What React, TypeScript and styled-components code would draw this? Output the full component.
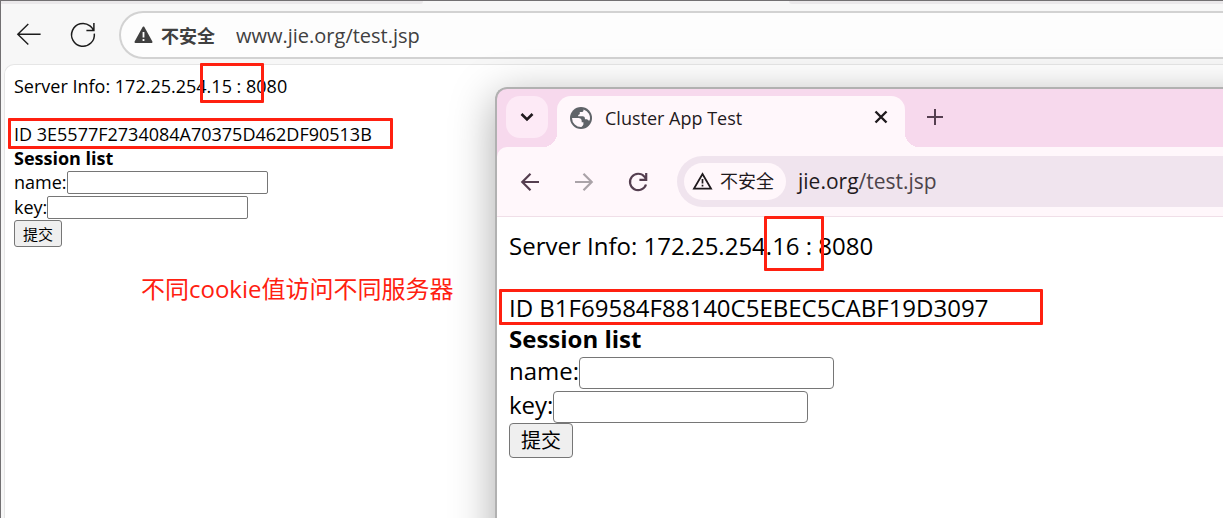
import React from "react";
import styled, { createGlobalStyle } from "styled-components";

const RED = "#ff2010";

const GlobalStyle = createGlobalStyle`
  *, *::before, *::after { box-sizing: border-box; }
  body {
    margin: 0;
    font-family: "Open Sans", "Noto Sans CJK SC", sans-serif;
    color: #000;
  }
  button, input { font: inherit; margin: 0; }
`;

const Desktop = styled.main`
  position: relative;
  min-height: 100vh;
  display: flex;
  overflow: hidden;
`;

/* ---------- back window ---------- */

const BackWindow = styled.section`
  flex: 1;
  display: flex;
  flex-direction: column;
  background: #f7f7f7;
  border-top: 1px solid #727072;
  border-left: 1px solid #727072;
`;

const TabEdge = styled.div`
  display: flex;
  justify-content: space-between;
  height: 3px;
`;

const InactiveTabs = styled.div<{ $side: "left" | "right" }>`
  width: ${(p) => (p.$side === "left" ? "34.5%" : "35.5%")};
  background: #eae8ea;
  border-radius: ${(p) => (p.$side === "left" ? "0 0 10px 0" : "0 0 0 10px")};
`;

const BackToolbar = styled.header`
  display: flex;
  align-items: center;
  padding: 7px 0 5px 14px;
`;

const IconButton = styled.button`
  display: inline-flex;
  align-items: center;
  justify-content: center;
  flex: none;
  padding: 0;
  border: 0;
  background: none;
  color: inherit;
  svg { display: block; }
  &:disabled { color: #aaa3a8; }
`;

const BackNav = styled.nav`
  display: flex;
  gap: 26px;
  width: 104px;
  color: #1c1c1c;
`;

const BackAddress = styled.div`
  flex: 1;
  display: flex;
  align-items: center;
  height: 48px;
  padding-left: 13px;
  border: 2px solid #d2d2d2;
  border-right: 0;
  border-radius: 24px 0 0 24px;
  background: #fdfdfd;
`;

const BackSecurity = styled.span`
  display: flex;
  align-items: center;
  gap: 8px;
  margin-right: 21px;
  font-size: 18px;
  font-weight: 700;
  color: #404040;
`;

const Url = styled.input`
  flex: 1;
  min-width: 0;
  padding: 0;
  border: 0;
  outline: 0;
  background: none;
  font-size: 20px;
  color: #404040;
`;

/* ---------- front window ---------- */

const FrontWindow = styled.section`
  position: absolute;
  top: 87px;
  left: 495px;
  right: 0;
  bottom: 0;
  display: flex;
  flex-direction: column;
  border-top: 2px solid #b1b1b1;
  border-left: 2px solid #b1b1b1;
  border-radius: 12px 0 0 0;
  overflow: hidden;
  background: #f7d9ed;
`;

const FrontShadow = styled.div`
  position: absolute;
  top: 87px;
  left: 495px;
  right: -80px;
  bottom: -80px;
  border-radius: 12px;
  box-shadow: 0 10px 44px rgba(0, 0, 0, 0.34);
`;

const TabStrip = styled.div`
  display: flex;
  height: 58px;
  padding: 7px 0 0 9px;
`;

const TabSearch = styled(IconButton)`
  width: 42px;
  height: 42px;
  margin-right: 9px;
  border-radius: 14px;
  background: #fdeaf6;
  color: #1f1a1d;
`;

const ActiveTab = styled.div`
  position: relative;
  display: flex;
  align-items: center;
  width: 348px;
  padding: 0 14px 8px 13px;
  border-radius: 14px 14px 0 0;
  background: #fff7fb;
  color: #1f1a1d;

  &::before, &::after {
    content: "";
    position: absolute;
    bottom: 0;
    width: 14px;
    height: 14px;
  }
  &::before {
    right: 100%;
    background: radial-gradient(circle at 0 0, transparent 14px, #fff7fb 14px);
  }
  &::after {
    left: 100%;
    background: radial-gradient(circle at 100% 0, transparent 14px, #fff7fb 14px);
  }
`;

const TabTitle = styled.span`
  flex: 1;
  margin-left: 13px;
  font-size: 18px;
  line-height: 24px;
`;

const NewTab = styled(IconButton)`
  width: 60px;
  height: 42px;
  color: #553f50;
`;

const FrontToolbar = styled.header`
  display: flex;
  align-items: center;
  height: 70px;
  padding: 0 0 1px 20px;
  border-bottom: 1px solid #f0dfe8;
  border-radius: 10px 0 0 0;
  background: #fff7fb;
`;

const FrontNav = styled.nav`
  display: flex;
  gap: 28px;
  width: 160px;
  color: #553f50;
`;

const FrontAddress = styled.div`
  flex: 1;
  display: flex;
  align-items: center;
  height: 51px;
  padding-left: 7px;
  border-radius: 26px 0 0 26px;
  background: #f0e4ee;
`;

const SecurityChip = styled.button`
  display: flex;
  align-items: center;
  gap: 7px;
  height: 37px;
  margin-right: 12px;
  padding: 0 12px 0 8px;
  border: 0;
  border-radius: 19px;
  background: #fff7fb;
  font-size: 18px;
  line-height: 24px;
  color: #1f1a1d;
  white-space: nowrap;
`;

const FrontUrl = styled.div`
  font-size: 21px;
  line-height: 28px;
  color: #4d444b;
  b { font-weight: 400; color: #1f1a1d; }
`;

/* ---------- test page shown in both windows ---------- */

const Page = styled.article<{ $large?: boolean }>`
  position: relative;
  flex: 1;
  background: #fff;
  white-space: nowrap;
  font-size: ${(p) => (p.$large ? 24 : 18)}px;
  line-height: ${(p) => (p.$large ? 31 : 24)}px;
  padding: ${(p) => (p.$large ? "13px 12px" : "9px")};
  ${(p) =>
    !p.$large &&
    `margin-left: 3px;
     border-top: 1px solid #e6e6e6;
     border-left: 1px solid #e6e6e6;
     border-radius: 10px 0 0 0;`}
`;

const Line = styled.p`
  margin: 0 0 1lh;
  & + & { margin: 0; }
`;

const Heading = styled.h1`
  margin: 0;
  font-size: inherit;
  font-weight: 700;
`;

const Form = styled.form<{ $large?: boolean }>`
  padding-top: ${(p) => (p.$large ? 1 : 0)}px;
`;

const Field = styled.div<{ $large?: boolean }>`
  display: flex;
  align-items: flex-start;
  height: ${(p) => (p.$large ? 34 : 25)}px;
  input {
    align-self: ${(p) => (p.$large ? "flex-end" : "center")};
    width: ${(p) => (p.$large ? 255 : 201)}px;
    height: ${(p) => (p.$large ? 32 : 23)}px;
    border: 1px solid #767676;
    border-radius: ${(p) => (p.$large ? 4 : 2)}px;
    background: #fff;
  }
`;

const Submit = styled.button<{ $large?: boolean }>`
  display: block;
  width: ${(p) => (p.$large ? 64 : 48)}px;
  height: ${(p) => (p.$large ? 35 : 27)}px;
  padding: 0;
  border: 1px solid #767676;
  border-radius: ${(p) => (p.$large ? 4 : 3)}px;
  background: #efefef;
  font-size: ${(p) => (p.$large ? 20 : 15)}px;
  line-height: 24px;
  color: #000;
`;

/* ---------- red annotations ---------- */

const Mark = styled.span<{ $x: number; $y: number; $w: number; $h: number }>`
  position: absolute;
  left: ${(p) => p.$x}px;
  top: ${(p) => p.$y}px;
  width: ${(p) => p.$w}px;
  height: ${(p) => p.$h}px;
  border: 3px solid ${RED};
  border-radius: 1px;
  pointer-events: none;
`;

const Note = styled.p`
  position: absolute;
  left: 141px;
  top: 273px;
  margin: 0;
  font-size: 24px;
  line-height: 32px;
  color: ${RED};
  white-space: nowrap;
`;

function Stroke({ size, width, d }: { size: number; width: number; d: string }) {
  return (
    <svg width={size} height={size} viewBox={`0 0 ${size} ${size}`} fill="none" stroke="currentColor" strokeWidth={width} aria-hidden="true">
      <path d={d} />
    </svg>
  );
}

function Globe() {
  return (
    <svg width="22" height="22" viewBox="0 0 22 22" aria-hidden="true">
      <circle cx="11" cy="11" r="11" fill="#5f6368" />
      <path
        fill="#fff7fb"
        d="M2 11H8.4C10.4 11 11.7 12.3 11.7 14V15.2H13.4V17.3C13.4 18.3 12.6 19 11.4 20A9 9 0 0 1 2 11Z"
      />
      <path
        fill="#fff7fb"
        d="M13.6 2.4C13.6 4.2 12.8 5 11.4 5H9.8V6.6C9.8 7.4 9.2 7.9 8.2 7.9V9.2H12.6C14 9.2 14.9 10 14.9 11.2V12.2H16.4C17.4 12.2 18 12.8 18.4 13.6L19.6 13.6A9 9 0 0 0 13.6 2.4Z"
      />
    </svg>
  );
}

function TestPage({ host, id, large }: { host: string; id: string; large?: boolean }) {
  const key = large ? "front" : "back";
  return (
    <>
      <Line>Server Info: {host} : 8080</Line>
      <Line>ID {id}</Line>
      <Heading>Session list</Heading>
      <Form $large={large} onSubmit={(e) => e.preventDefault()}>
        <Field $large={large}>
          <label htmlFor={`${key}-name`}>name:</label>
          <input id={`${key}-name`} type="text" />
        </Field>
        <Field $large={large}>
          <label htmlFor={`${key}-key`}>key:</label>
          <input id={`${key}-key`} type="text" />
        </Field>
        <Submit $large={large} type="submit">提交</Submit>
      </Form>
    </>
  );
}

export default function App() {
  return (
    <>
      <GlobalStyle />
      <Desktop>
        <BackWindow>
          <TabEdge>
            <InactiveTabs $side="left" />
            <InactiveTabs $side="right" />
          </TabEdge>
          <BackToolbar>
            <BackNav>
              <IconButton aria-label="Back">
                <Stroke size={28} width={1.4} d="M25.6 13.2H2.6M13.3 3L2.8 13.2L13.3 23.4" />
              </IconButton>
              <IconButton aria-label="Reload">
                <Stroke size={28} width={1.5} d="M25.3 12.6A11.4 11.4 0 1 1 21 4.9Q23.2 6.6 24.6 9.3M24.9 2V9.6H17.4" />
              </IconButton>
            </BackNav>
            <BackAddress>
              <BackSecurity>
                <svg width="19" height="18" viewBox="0 0 19 18" aria-hidden="true">
                  <path d="M9.5 1.5L17.5 16H1.5Z" fill="#404040" stroke="#404040" strokeWidth="2" strokeLinejoin="round" />
                  <path d="M9.5 6V11.5M9.5 13V15" stroke="#fff" strokeWidth="1.8" />
                </svg>
                不安全
              </BackSecurity>
              <Url aria-label="Address" defaultValue="www.jie.org/test.jsp" />
            </BackAddress>
          </BackToolbar>
          <Page>
            <TestPage host="172.25.254.15" id="3E5577F2734084A70375D462DF90513B" />
          </Page>
        </BackWindow>

        <FrontShadow />
        <FrontWindow>
          <TabStrip>
            <TabSearch aria-label="Search tabs">
              <Stroke size={14} width={2.6} d="M1.5 4L7 9.5L12.5 4" />
            </TabSearch>
            <ActiveTab>
              <Globe />
              <TabTitle>Cluster App Test</TabTitle>
              <IconButton aria-label="Close tab">
                <Stroke size={20} width={2.4} d="M4.5 3.5L15.5 14.5M15.5 3.5L4.5 14.5" />
              </IconButton>
            </ActiveTab>
            <NewTab aria-label="New tab">
              <Stroke size={16} width={2} d="M8 0V16M0 8H16" />
            </NewTab>
          </TabStrip>
          <FrontToolbar>
            <FrontNav>
              <IconButton aria-label="Back">
                <Stroke size={26} width={2.2} d="M22 14H5.5M13.5 5.8L5.3 14L13.5 22.2" />
              </IconButton>
              <IconButton aria-label="Forward" disabled>
                <Stroke size={26} width={2.2} d="M4 14H20.5M12.5 5.8L20.7 14L12.5 22.2" />
              </IconButton>
              <IconButton aria-label="Reload">
                <Stroke size={26} width={2.2} d="M21 16.5A8.2 8.2 0 1 1 19.4 8.6L21 11M21.2 5V11.8H14.4" />
              </IconButton>
            </FrontNav>
            <FrontAddress>
              <SecurityChip type="button">
                <svg width="21" height="18" viewBox="0 0 21 18" fill="none" stroke="#1f1a1d" aria-hidden="true">
                  <path d="M10.5 2L19 16.6H2Z" strokeWidth="1.8" />
                  <path d="M10.5 7V11.5M10.5 12.8V14.6" strokeWidth="1.7" />
                </svg>
                不安全
              </SecurityChip>
              <FrontUrl><b>jie.org</b>/test.jsp</FrontUrl>
            </FrontAddress>
          </FrontToolbar>
          <Page $large>
            <TestPage large host="172.25.254.16" id="B1F69584F88140C5EBEC5CABF19D3097" />
          </Page>
        </FrontWindow>

        <Mark $x={200} $y={63} $w={64} $h={40} />
        <Mark $x={8} $y={118} $w={385} $h={31} />
        <Mark $x={764} $y={216} $w={60} $h={55} />
        <Mark $x={499} $y={289} $w={544} $h={36} />
        <Note>不同cookie值访问不同服务器</Note>
      </Desktop>
    </>
  );
}
